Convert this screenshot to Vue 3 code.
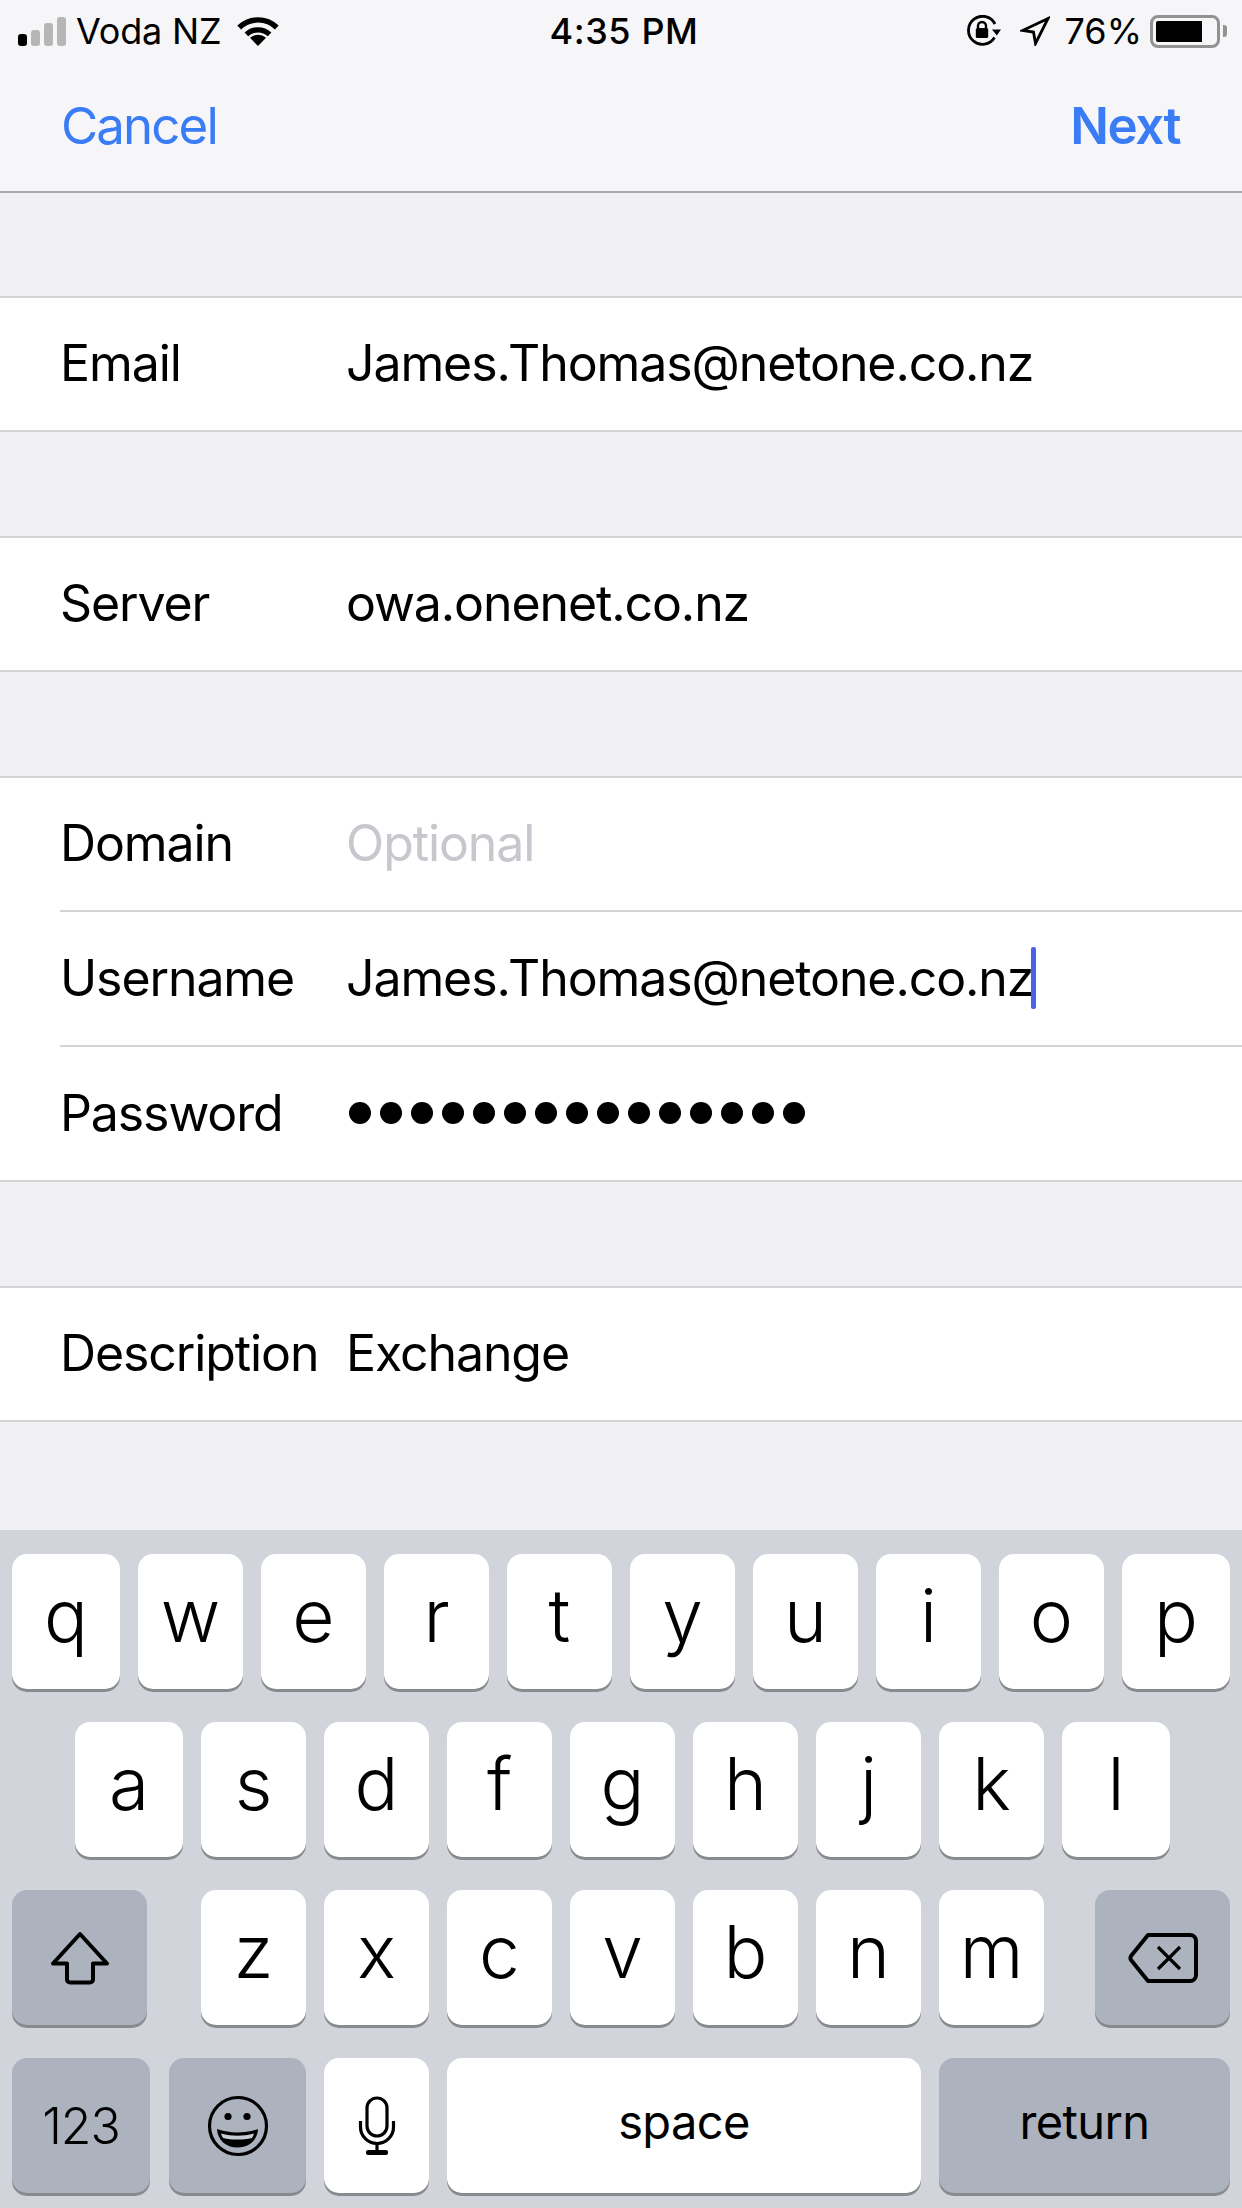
<script setup>
const groups = [
  [{ label: "Email", value: "James.Thomas@netone.co.nz" }],
  [{ label: "Server", value: "owa.onenet.co.nz" }],
  [
    { label: "Domain", value: "Optional", placeholder: true },
    { label: "Username", value: "James.Thomas@netone.co.nz", caret: true },
    { label: "Password", dots: 15 },
  ],
  [{ label: "Description", value: "Exchange" }],
]

const rowOne = ["q", "w", "e", "r", "t", "y", "u", "i", "o", "p"]
const rowTwo = ["a", "s", "d", "f", "g", "h", "j", "k", "l"]
const rowThree = ["z", "x", "c", "v", "b", "n", "m"]
</script>

<template>
  <div class="screen">
    <header class="top">
      <div class="status">
        <div class="status-left">
          <div class="signal">
            <i class="bar bar-1 on"></i>
            <i class="bar bar-2"></i>
            <i class="bar bar-3"></i>
            <i class="bar bar-4"></i>
          </div>
          <span class="carrier">Voda NZ</span>
          <svg class="wifi" width="42" height="30" viewBox="0 0 42 30">
            <path d="M2.2 11.5a27 27 0 0 1 37.6 0" fill="none" stroke="#000" stroke-width="5.4" />
            <path d="M9.4 18.4a17 17 0 0 1 23.2 0" fill="none" stroke="#000" stroke-width="5.2" />
            <path d="M21 30l-8-8.2a12 12 0 0 1 16 0z" fill="#000" />
          </svg>
        </div>
        <span class="time">4:35 PM</span>
        <div class="status-right">
          <svg class="rotation" width="36" height="32" viewBox="0 0 36 32">
            <path d="M29 9A14 14 0 1 0 28.500 22.500" fill="none" stroke="#000" stroke-width="2.8" />
            <path d="M35 14.500l-4.200 6-4.800-6z" fill="#000" />
            <path d="M12 13v-2a4 4 0 0 1 8 0v2" fill="none" stroke="#000" stroke-width="2.400" />
            <rect x="9.800" y="13" width="12.400" height="10" rx="1.500" fill="#000" />
          </svg>
          <svg class="location" width="30" height="30" viewBox="0 0 30 30">
            <path d="M28 2.500L2.500 14.500l11 1.500 2 11.500z" fill="none" stroke="#000" stroke-width="2.800" stroke-linejoin="miter" />
          </svg>
          <span class="battery-text">76%</span>
          <div class="battery">
            <div class="battery-body"><i class="battery-fill"></i></div>
            <i class="battery-nub"></i>
          </div>
        </div>
      </div>
      <nav class="nav">
        <span class="nav-cancel">Cancel</span>
        <span class="nav-next">Next</span>
      </nav>
    </header>

    <main class="form">
      <section v-for="(group, g) in groups" :key="g" class="group">
        <div v-for="row in group" :key="row.label" class="row">
          <span class="label">{{ row.label }}</span>
          <div v-if="row.dots" class="dots">
            <i v-for="n in row.dots" :key="n" class="dot"></i>
          </div>
          <span v-else class="value" :class="{ placeholder: row.placeholder }">{{ row.value }}</span>
          <i v-if="row.caret" class="caret"></i>
        </div>
      </section>
    </main>

    <div class="keyboard">
      <div class="kb-row">
        <div
          v-for="(k, i) in rowOne"
          :key="k"
          class="key letter"
          :class="{ wide: i === 0 || i === rowOne.length - 1 }"
        >
          {{ k }}
        </div>
      </div>
      <div class="kb-row row-two">
        <div
          v-for="(k, i) in rowTwo"
          :key="k"
          class="key letter"
          :class="{ wide: i === 0 || i === rowTwo.length - 1 }"
        >
          {{ k }}
        </div>
      </div>
      <div class="kb-row row-three">
        <div class="key dark side">
          <svg width="62" height="56" viewBox="0 0 62 56">
            <path
              d="M31 4L4 33.5h14v16a3 3 0 0 0 3 3h20a3 3 0 0 0 3-3v-16h14z"
              fill="none"
              stroke="#000"
              stroke-width="4"
              stroke-linejoin="round"
            />
          </svg>
        </div>
        <div class="letters">
          <div v-for="k in rowThree" :key="k" class="key letter">{{ k }}</div>
        </div>
        <div class="key dark side">
          <svg width="70" height="52" viewBox="0 0 70 52">
            <path
              d="M20 3h42a6 6 0 0 1 6 6v34a6 6 0 0 1-6 6H20L3 28a4 4 0 0 1 0-4z"
              fill="none"
              stroke="#000"
              stroke-width="4"
              stroke-linejoin="round"
            />
            <path d="M30 15l22 22M52 15L30 37" stroke="#000" stroke-width="3.2" />
          </svg>
        </div>
      </div>
      <div class="kb-row row-four">
        <div class="key dark numbers">123</div>
        <div class="key dark emoji">
          <svg width="62" height="62" viewBox="0 0 62 62">
            <circle cx="31" cy="31" r="28.500" fill="none" stroke="#000" stroke-width="3.200" />
            <circle cx="21" cy="21.500" r="3.600" fill="#000" />
            <circle cx="40" cy="21.500" r="3.600" fill="#000" />
            <path d="M10 34c13 4.500 28 4.500 41 0-.5 11-9 18.500-20.500 18.500S10.500 45 10 34z" fill="#000" />
            <path d="M14 38.500c11 3 22 3 33 0-.5 1.500-1 3-2 4.500-9 2-20 2-29 0-1-1.500-1.500-3-2-4.500z" fill="#c9cdd5" />
          </svg>
        </div>
        <div class="key mic">
          <svg width="38" height="60" viewBox="0 0 38 60">
            <rect x="9" y="2" width="20" height="38" rx="10" fill="none" stroke="#000" stroke-width="3.2" />
            <path d="M2.500 25v6a16.500 16.500 0 0 0 33 0v-6" fill="none" stroke="#000" stroke-width="3.2" />
            <path d="M19 47v9" stroke="#000" stroke-width="3.2" />
            <rect x="8" y="54" width="22" height="5" rx="2" fill="#000" />
          </svg>
        </div>
        <div class="key space">space</div>
        <div class="key dark return">return</div>
      </div>
    </div>
  </div>
</template>

<style scoped>
.screen {
  width: 1242px;
  height: 2208px;
  display: flex;
  flex-direction: column;
  overflow: hidden;
  background: #efeff4;
  color: #000;
  font-family: Inter, "Liberation Sans", sans-serif;
}

.top {
  height: 193px;
  box-sizing: border-box;
  background: #f6f6f8;
  border-bottom: 2px solid #a9a9ad;
}

.status {
  height: 62px;
  display: grid;
  grid-template-columns: 1fr auto 1fr;
  align-items: center;
  font-size: 36px;
  letter-spacing: -0.4px;
}

.status-left {
  display: flex;
  align-items: center;
  padding-left: 18px;
}

.signal {
  display: flex;
  align-items: flex-end;
  gap: 4px;
  height: 29px;
}

.bar {
  width: 9px;
  border-radius: 3px;
  background: #b6b6b6;
}

.bar-1 {
  height: 12px;
}

.bar-2 {
  height: 16px;
}

.bar-3 {
  height: 23px;
}

.bar-4 {
  height: 29px;
}

.on {
  background: #000;
}

.carrier {
  margin-left: 10px;
  letter-spacing: -0.2px;
}

.wifi {
  margin-left: 16px;
}

.time {
  margin-left: 6px;
  font-weight: 500;
  letter-spacing: 0.6px;
}

.status-right {
  display: flex;
  align-items: center;
  justify-content: flex-end;
  padding-right: 15px;
}

.location {
  margin-left: 18px;
}

.battery-text {
  margin-left: 15px;
  letter-spacing: 0;
}

.battery {
  display: flex;
  align-items: center;
  margin-left: 8px;
}

.battery-body {
  width: 70px;
  height: 33px;
  box-sizing: border-box;
  border: 3px solid #929292;
  border-radius: 8px;
  padding: 3px;
}

.battery-fill {
  display: block;
  width: 46px;
  height: 100%;
  border-radius: 2px 0 0 2px;
  background: #000;
}

.battery-nub {
  width: 4px;
  height: 12px;
  margin-left: 3px;
  border-radius: 0 3px 3px 0;
  background: #929292;
}

.nav {
  height: 129px;
  box-sizing: border-box;
  display: flex;
  justify-content: space-between;
  align-items: center;
  padding: 0 62px 2px 61px;
  font-size: 51px;
  color: #3a7cf6;
}

.nav-cancel {
  letter-spacing: -1.9px;
}

.nav-next {
  font-weight: 600;
  letter-spacing: -1.5px;
}

.form {
  flex: 1;
  display: flex;
  flex-direction: column;
  gap: 104px;
  padding-top: 103px;
}

.group {
  background: #fff;
  border-top: 2px solid #d4d4d7;
  border-bottom: 2px solid #d4d4d7;
}

.row {
  position: relative;
  height: 132px;
  box-sizing: border-box;
  display: flex;
  align-items: center;
  margin-left: 60px;
  padding-bottom: 2px;
  font-size: 50px;
  letter-spacing: -1.1px;
}

.row + .row {
  height: 135px;
  border-top: 2px solid #d4d4d7;
}

.label {
  width: 286px;
  flex-shrink: 0;
}

.placeholder {
  color: #c7c7cd;
}

.caret {
  width: 5px;
  height: 62px;
  margin-left: -2px;
  border-radius: 2px;
  background: #4a63e7;
}

.dots {
  display: flex;
  gap: 9px;
  padding-left: 3px;
}

.dot {
  width: 22px;
  height: 22px;
  border-radius: 50%;
  background: #000;
}

.keyboard {
  height: 678px;
  box-sizing: border-box;
  display: flex;
  flex-direction: column;
  gap: 33px;
  padding: 24px 12px 0;
  background: #d1d5db;
}

.kb-row {
  display: flex;
  gap: 18px;
  height: 135px;
}

.row-two {
  padding-left: 63px;
}

.row-three {
  gap: 0;
}

.letters {
  display: flex;
  gap: 18px;
  margin: 0 51px 0 54px;
}

.key {
  display: flex;
  align-items: center;
  justify-content: center;
  width: 105px;
  height: 135px;
  box-sizing: border-box;
  border-radius: 15px;
  background: #fff;
  box-shadow: 0 3px 0 #898a8d;
  flex-shrink: 0;
}

.letter {
  padding-bottom: 13px;
  font-size: 73px;
  font-weight: 300;
}

.wide {
  width: 108px;
}

.dark {
  background: #acb3be;
}

.side {
  width: 135px;
}

.numbers {
  width: 138px;
  font-size: 50px;
  font-weight: 300;
  letter-spacing: -1px;
}

.emoji {
  width: 137px;
  margin-left: 1px;
}

.space {
  width: 474px;
  padding-bottom: 9px;
  font-size: 47px;
  letter-spacing: -0.6px;
}

.return {
  width: 291px;
  padding-bottom: 9px;
  font-size: 47px;
  letter-spacing: -0.6px;
}
</style>

<style>
body {
  margin: 0;
}
</style>
